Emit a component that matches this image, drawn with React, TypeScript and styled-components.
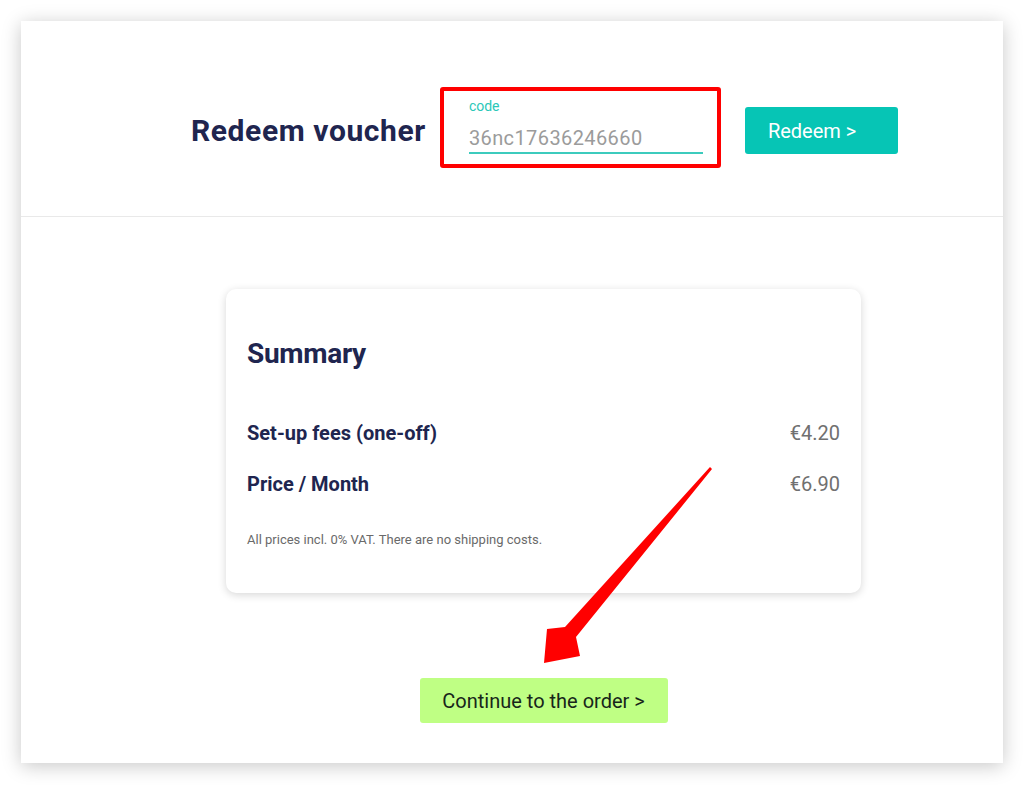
import React from "react";
import styled, { createGlobalStyle } from "styled-components";

const Global = createGlobalStyle`
  html, body { margin: 0; padding: 0; background: #ffffff; }
  body { font-family: Roboto, "Liberation Sans", sans-serif; }
  * { box-sizing: border-box; }
`;

const Page = styled.div`
  position: relative;
  width: 1024px;
  height: 785px;
  padding: 21px 21px 0 21px;
  overflow: hidden;
`;

const Frame = styled.div`
  width: 982px;
  height: 742px;
  background: #fff;
  box-shadow: 0 3px 18px rgba(0, 0, 0, 0.22);
  display: flex;
  flex-direction: column;
`;

const Header = styled.div`
  height: 196px;
  display: flex;
  align-items: flex-start;
  padding: 66px 0 0 170px;
  border-bottom: 1px solid #e9e9e9;
`;

const Title = styled.h1`
  margin: 26px 14px 0 0;
  font-size: 30px;
  line-height: 36px;
  font-weight: 700;
  color: #20254f;
  letter-spacing: 0.6px;
`;

const Highlight = styled.div`
  width: 281px;
  height: 81px;
  border: 4px solid #ff0000;
  border-radius: 3px;
  padding: 7px 14px 0 25px;
  display: flex;
  flex-direction: column;
`;

const FieldLabel = styled.label`
  font-size: 14px;
  line-height: 16px;
  color: #2bc7b8;
`;

const FieldInput = styled.div`
  margin-top: 12px;
  font-size: 20px;
  line-height: 24px;
  color: #9b9b9b;
  letter-spacing: 0.4px;
  padding-bottom: 2px;
  border-bottom: 2px solid #3ccbbd;
`;

const RedeemButton = styled.button`
  margin: 20px 0 0 24px;
  width: 153px;
  height: 47px;
  border: none;
  border-radius: 3px;
  background: #06c5b5;
  color: #fff;
  font-family: inherit;
  font-size: 20px;
  text-align: left;
  padding: 0 0 0 23px;
`;

const Body = styled.div`
  flex: 1;
  padding: 72px 0 0 205px;
  display: flex;
  flex-direction: column;
  align-items: flex-start;
`;

const Column = styled.div`
  width: 635px;
  display: flex;
  flex-direction: column;
  align-items: center;
`;

const SummaryCard = styled.div`
  align-self: stretch;
  height: 304px;
  border-radius: 10px;
  background: #fff;
  box-shadow: 0 2px 9px rgba(0, 0, 0, 0.16);
  padding: 48px 21px 0 21px;
  display: flex;
  flex-direction: column;
`;

const SummaryTitle = styled.h2`
  margin: 0 0 50px 0;
  font-size: 28px;
  line-height: 34px;
  font-weight: 700;
  color: #20254f;
  letter-spacing: -0.3px;
`;

const Row = styled.div<{ $gap?: number }>`
  display: flex;
  justify-content: space-between;
  margin-bottom: ${(p) => p.$gap ?? 0}px;
  font-size: 20px;
  line-height: 24px;
`;

const RowLabel = styled.span`
  font-weight: 700;
  color: #20254f;
`;

const RowValue = styled.span`
  color: #707070;
`;

const Note = styled.p`
  margin: 0;
  font-size: 13px;
  line-height: 16px;
  color: #6a6a6a;
`;

const ContinueButton = styled.button`
  margin-top: 85px;
  width: 248px;
  height: 45px;
  border: none;
  border-radius: 3px;
  background: #bfff84;
  color: #17261a;
  font-family: inherit;
  font-size: 20px;
  padding: 0;
`;

const ArrowLayer = styled.svg`
  position: absolute;
  left: 0;
  top: 0;
  pointer-events: none;
`;

export default function App() {
  return (
    <>
      <Global />
      <Page>
        <Frame>
          <Header>
            <Title>Redeem voucher</Title>
            <Highlight>
              <FieldLabel>code</FieldLabel>
              <FieldInput>36nc17636246660</FieldInput>
            </Highlight>
            <RedeemButton>Redeem &gt;</RedeemButton>
          </Header>
          <Body>
            <Column>
              <SummaryCard>
                <SummaryTitle>Summary</SummaryTitle>
                <Row $gap={27}>
                  <RowLabel>Set-up fees (one-off)</RowLabel>
                  <RowValue>€4.20</RowValue>
                </Row>
                <Row $gap={36}>
                  <RowLabel>Price / Month</RowLabel>
                  <RowValue>€6.90</RowValue>
                </Row>
                <Note>All prices incl. 0% VAT. There are no shipping costs.</Note>
              </SummaryCard>
              <ContinueButton>Continue to the order &gt;</ContinueButton>
            </Column>
          </Body>
        </Frame>
        <ArrowLayer width="1024" height="785" viewBox="0 0 1024 785">
          <polygon
            points="544,663 547,629 565,627 710,467 712,469 576,637 580,656"
            fill="#ff0000"
          />
        </ArrowLayer>
      </Page>
    </>
  );
}
